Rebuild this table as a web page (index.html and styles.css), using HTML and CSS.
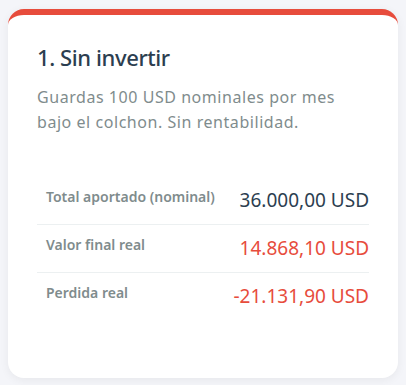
FILE: index.html
```html
<!DOCTYPE html>
<html lang="es">
  <head>
    <meta charset="UTF-8" />
    <meta name="viewport" content="width=device-width, initial-scale=1.0" />
    <title>Sin invertir</title>
    <link rel="stylesheet" href="styles.css">
  </head>
  <body>
    <div class="card red">
      <h2>1. Sin invertir</h2>
      <p class="desc">Guardas 100 USD nominales por mes bajo el colchon. Sin rentabilidad.</p>

      <table class="results">
        <tr>
          <th>Total aportado (nominal)</th>
          <td>36.000,00 USD</td>
        </tr>
        <tr>
          <th>Valor final real</th>
          <td class="loss">14.868,10 USD</td>
        </tr>
        <tr>
          <th>Perdida real</th>
          <td class="loss">-21.131,90 USD</td>
        </tr>
      </table>
    </div>
  </body>
</html>
```

FILE: styles.css
```css
* {
  padding: 0;
  margin: 0;
  box-sizing: border-box;
}

body {
  background-color: #f4f5f9;
  padding: 9px 8px 8px;
  font-family: "Segoe UI", "Noto Sans", sans-serif;
}

.card {
  background-color: #fff;
  border-radius: 16px;
  border-top: 6px solid #e74c3c;
  padding: 28px 29px 58px;
  box-shadow: 0 2px 10px rgb(0, 0, 0, 0.06);
}

.card h2 {
  font-size: 22px;
  font-weight: 500;
  line-height: 1.3;
  letter-spacing: -0.4px;
  color: #2c3e50;
}

.card .desc {
  margin-top: 13px;
  font-size: 16px;
  line-height: 25px;
  letter-spacing: 0.55px;
  color: #7f8c8d;
}

.results {
  width: 100%;
  margin-top: 42px;
  border-collapse: collapse;
}

.results tr + tr {
  border-top: 1px solid #ecf0f1;
}

.results th {
  text-align: left;
  vertical-align: top;
  padding: 10px 0 10px 9px;
  font-size: 14px;
  font-weight: 600;
  line-height: 1.4;
  color: #7f8c8d;
}

.results td {
  text-align: right;
  vertical-align: top;
  padding: 10px 0;
  font-size: 19px;
  line-height: 27px;
  color: #2c3e50;
}

.results td.loss {
  color: #e74c3c;
}
```
